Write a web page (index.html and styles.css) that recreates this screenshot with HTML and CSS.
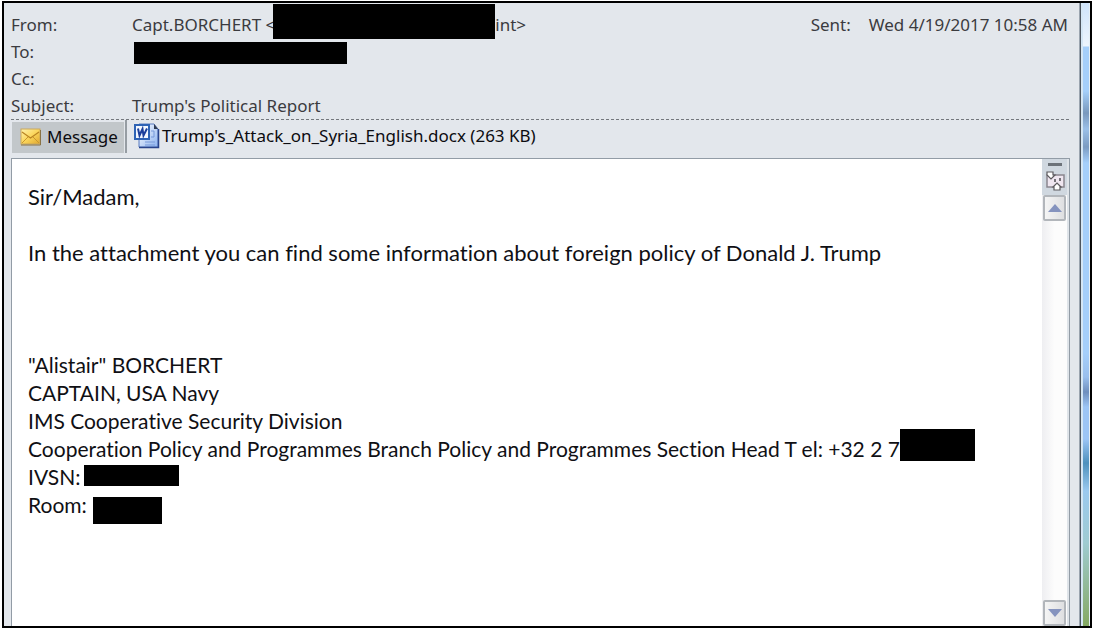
FILE: index.html
```
<!DOCTYPE html>
<html lang="en">
<head>
    <meta charset="UTF-8">
    <meta name="viewport" content="width=device-width, initial-scale=1.0">
    <title>Trump's Political Report</title>
    <link rel="stylesheet" href="styles.css">
</head>
<body>
    <div class="window">
        <div class="mail">
            <header class="mail-header">
                <dl class="fields">
                    <div class="field">
                        <dt>From:</dt>
                        <dd>Capt.BORCHERT &lt;<span class="redacted redacted-from"></span>int&gt;</dd>
                    </div>
                    <div class="field">
                        <dt>To:</dt>
                        <dd><span class="redacted redacted-to"></span></dd>
                    </div>
                    <div class="field">
                        <dt>Cc:</dt>
                        <dd></dd>
                    </div>
                    <div class="field">
                        <dt>Subject:</dt>
                        <dd>Trump's Political Report</dd>
                    </div>
                </dl>
                <p class="sent"><span>Sent:</span><time datetime="2017-04-19T10:58">Wed 4/19/2017 10:58 AM</time></p>
            </header>
            <svg class="divider" height="1" aria-hidden="true"><line x1="0" y1="0.5" x2="100%" y2="0.5" stroke="#74787d" stroke-dasharray="3 2"/></svg>
            <div class="attachments">
                <button type="button" class="tab">
                    <svg width="21" height="18" viewBox="0 0 21 18" aria-hidden="true">
                        <defs>
                            <linearGradient id="env" x1="0" y1="0" x2="1" y2="1">
                                <stop offset="0" stop-color="#fff3ae"/>
                                <stop offset="0.5" stop-color="#fbd65c"/>
                                <stop offset="1" stop-color="#dfa62c"/>
                            </linearGradient>
                        </defs>
                        <rect x="1" y="1" width="19" height="15" fill="url(#env)" stroke="#c9a75c"/>
                        <path d="M2 15l6-6M19 15l-6-6" stroke="#c9972f" fill="none"/>
                        <path d="M2 4l8.500 6L19 4" stroke="#b98422" stroke-width="1.2" fill="none"/>
                        <path d="M1 17h19.500V2" stroke="#8a7243" fill="none"/>
                    </svg>
                    Message
                </button>
                <a class="file" href="#">
                    <svg width="26" height="26" viewBox="0 0 26 26" aria-hidden="true">
                        <defs>
                            <linearGradient id="sheet" x1="0" y1="0" x2="1" y2="1">
                                <stop offset="0" stop-color="#ffffff"/>
                                <stop offset="1" stop-color="#8cb2ef"/>
                            </linearGradient>
                        </defs>
                        <path d="M5 1h15l4 5v18H5z" fill="url(#sheet)" stroke="#5a7cc0"/>
                        <path d="M5 24.500h19.500V6" stroke="#29448c" stroke-width="1.5" fill="none"/>
                        <path d="M20 1v5h4z" fill="#303c52"/>
                        <path d="M17 8h3v6h-3M11 19h10M11 22h10" stroke="#7799d9" fill="none"/>
                        <rect x="1" y="2" width="14" height="14" fill="#f3f8ff" stroke="#2e63b5" stroke-width="2"/>
                        <path d="M4 5.500l1.500 7L8.500 6l1 6.500L13 5.500" stroke="#1c3f9b" stroke-width="2" fill="none"/>
                    </svg>
                    Trump's_Attack_on_Syria_English.docx (263 KB)
                </a>
            </div>
            <main class="reader">
                <article class="message">
                    <p>Sir/Madam,</p>
                    <p>In the attachment you can find some information about foreign policy of Donald J. Trump</p>
                    <address class="signature">
                        <div>"Alistair" BORCHERT</div>
                        <div>CAPTAIN, USA Navy</div>
                        <div>IMS Cooperative Security Division</div>
                        <div class="line">Cooperation Policy and Programmes Branch Policy and Programmes Section Head T el: +32 2 7<span class="redacted redacted-tel"></span></div>
                        <div class="line">IVSN:<span class="redacted redacted-ivsn"></span></div>
                        <div class="line">Room:<span class="redacted redacted-room"></span></div>
                    </address>
                </article>
                <div class="scrollbar">
                    <div class="scroll-tools">
                        <span class="splitter"></span>
                        <svg width="20" height="20" viewBox="0 0 20 20" aria-hidden="true">
                            <path d="M2 4h17v12H2z" fill="#efe6f0" stroke="#8a868e" stroke-width="1.5"/>
                            <path d="M3 1h5v3h2L6 8 2 4V1z" fill="#fff" stroke="#5c5a5e" stroke-width="1.2"/>
                            <path d="M10 8v3M15 7v3" stroke="#4e4c50" stroke-width="1.5"/>
                            <path d="M9 19v-3H8l4-4 4 4h-1v3z" fill="#fff" stroke="#5c5a5e" stroke-width="1.2"/>
                        </svg>
                    </div>
                    <button type="button" class="arrow" aria-label="Scroll up">
                        <svg width="14" height="8" viewBox="0 0 14 8" aria-hidden="true"><path d="M0 8l7-8 7 8z" fill="#8593be"/></svg>
                    </button>
                    <button type="button" class="arrow arrow-down" aria-label="Scroll down">
                        <svg width="14" height="8" viewBox="0 0 14 8" aria-hidden="true"><path d="M0 0h14L7 8z" fill="#8593be"/></svg>
                    </button>
                </div>
            </main>
        </div>
        <div class="desktop-edge"></div>
    </div>
</body>
</html>
```
FILE: styles.css
```
* {
    box-sizing: border-box;
}
body {
    margin: 0;
    padding: 1px 1px 1px 2px;
    height: 100vh;
    overflow: hidden;
    background: #fff;
    font-family: "Noto Sans", "Open Sans", sans-serif;
    font-size: 17px;
    color: #3b3b3f;
}
p, dl, dd {
    margin: 0;
}
.window {
    display: flex;
    height: 100%;
    border: 2px solid #000;
}
.mail {
    flex: 1;
    min-width: 0;
    display: flex;
    flex-direction: column;
    padding: 8px 9px 0 7px;
    background: #e3e7ec;
    border-right: 1px solid #9aa4af;
}

/* header fields */
.mail-header {
    display: flex;
    justify-content: space-between;
    line-height: 27px;
}
.field {
    display: flex;
    height: 27px;
}
.field dt {
    width: 121px;
}
.field dd {
    display: flex;
    align-items: center;
}
.sent {
    display: flex;
    gap: 18px;
    padding-right: 2px;
}
.redacted {
    display: block;
    flex: none;
    background: #000;
}
.redacted-from {
    width: 222px;
    height: 35px;
    margin: -6px 0 0 -2px;
}
.redacted-to {
    width: 213px;
    height: 22px;
    margin: 2px 0 0 2px;
}

/* message tab and attachment */
.divider {
    display: block;
    flex: none;
    width: 100%;
}
.attachments {
    display: flex;
    height: 38px;
    padding-bottom: 5px;
    color: #0c0c10;
}
.tab {
    display: flex;
    align-items: center;
    gap: 6px;
    width: 112px;
    margin: 2px 1px 0 1px;
    padding: 0 0 2px 8px;
    border: 0;
    background: #c2c7ca;
    font: inherit;
    color: inherit;
}
.file {
    display: flex;
    align-items: center;
    gap: 2px;
    padding: 0 0 2px 7px;
    border-left: 2px solid #969da3;
    color: inherit;
    text-decoration: none;
}

/* reading pane */
.reader {
    flex: 1;
    display: flex;
    min-height: 0;
    background: #fff;
    border: 1px solid #929ca6;
    border-bottom: 0;
}
.message {
    flex: 1;
    min-width: 0;
    padding: 24px 16px 0;
    font-family: Lato, sans-serif;
    font-size: 22px;
    font-variant-ligatures: none;
    line-height: 28px;
    color: #101014;
}
.message p {
    margin-bottom: 28px;
}
.signature {
    margin-top: 84px;
    font-size: 21px;
    font-style: normal;
    white-space: nowrap;
}
.line {
    display: flex;
    align-items: center;
    height: 28px;
}
.redacted-tel {
    width: 75px;
    height: 32px;
    margin-bottom: 8px;
}
.redacted-ivsn {
    width: 95px;
    height: 21px;
    margin: 0 0 4px 4px;
}
.redacted-room {
    width: 69px;
    height: 27px;
    margin: 11px 0 0 6px;
}

/* scrollbar */
.scrollbar {
    display: flex;
    flex-direction: column;
    align-items: center;
    width: 27px;
    border-right: 2px solid #dfe4e9;
    background: linear-gradient(to right, #eeeef1, #fcfcfc 50%);
}
.scroll-tools {
    display: flex;
    flex-direction: column;
    align-items: center;
    gap: 5px;
    width: 100%;
    height: 36px;
    padding-top: 4px;
    background: #d0d8e0;
}
.splitter {
    width: 14px;
    height: 3px;
    background: #6c7279;
}
.arrow {
    display: flex;
    align-items: center;
    justify-content: center;
    width: 23px;
    height: 26px;
    padding: 0;
    border: 2px solid #b2b6bb;
    border-radius: 2px;
    background: linear-gradient(to right, #f5f5f5, #dedfe1);
}
.arrow-down {
    margin-top: auto;
}

/* strip of desktop behind the window */
.desktop-edge {
    width: 10px;
    border-left: 1px solid #4d565f;
    box-shadow: inset 2px 0 #d5e7f5, inset -1px 0 #e5eff5;
    background: linear-gradient(#cfe4fa 0, #edf5fd 43px, #a5cffa 44px, #a5cffa 88px, #7898bd 110px, #9bc0e8 126px, #7c9cc2 144px, #a5cffa 160px, #a5cffa 350px, #99bfed 374px, #6f8fbd 389px, #9cc5f5 404px, #9cc5f5 436px, #4e91bd 460px, #9bc9ef 488px, #9fcbd1 540px, #85a962 100%);
}
```
